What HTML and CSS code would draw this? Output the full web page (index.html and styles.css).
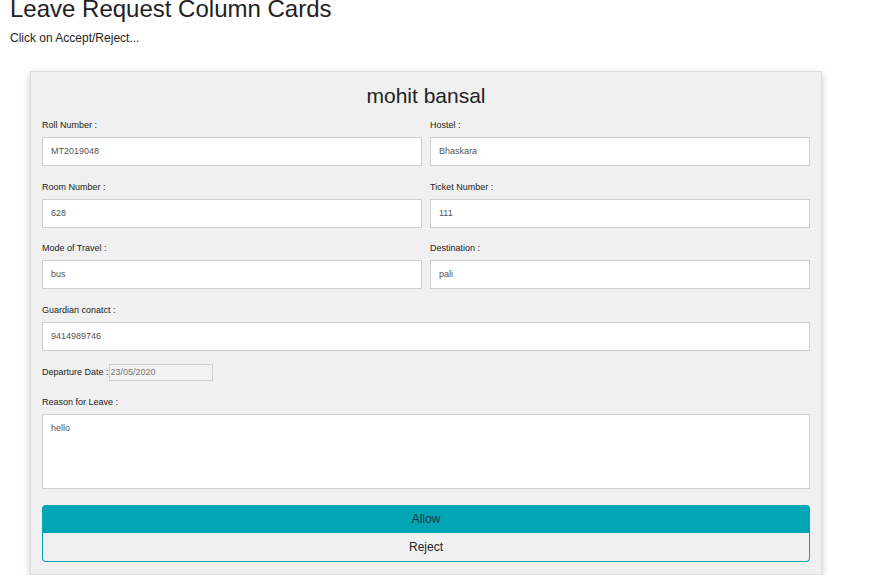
FILE: index.html
```html
<!DOCTYPE html>
<html>
<head>
<meta charset="utf-8">
<link rel="stylesheet" href="styles.css">
</head>
<body>
<h1 class="title">Leave Request Column Cards</h1>
<p class="subtitle">Click on Accept/Reject...</p>
<div class="card">
  <h2 class="name">mohit bansal</h2>
  <div class="grid">
    <div class="field">
      <label class="label">Roll Number :</label>
      <div class="input">MT2019048</div>
    </div>
    <div class="field">
      <label class="label">Hostel :</label>
      <div class="input">Bhaskara</div>
    </div>
    <div class="field">
      <label class="label">Room Number :</label>
      <div class="input">628</div>
    </div>
    <div class="field">
      <label class="label">Ticket Number :</label>
      <div class="input">111</div>
    </div>
    <div class="field">
      <label class="label">Mode of Travel :</label>
      <div class="input">bus</div>
    </div>
    <div class="field">
      <label class="label">Destination :</label>
      <div class="input">pali</div>
    </div>
    <div class="field full">
      <label class="label">Guardian conatct :</label>
      <div class="input">9414989746</div>
    </div>
  </div>
  <div class="date-row">
    <span class="label-inline">Departure Date :</span><span class="date-input">23/05/2020</span>
  </div>
  <div class="field reason">
    <label class="label">Reason for Leave :</label>
    <div class="textarea">hello</div>
  </div>
  <div class="actions">
    <button class="btn btn-allow">Allow</button>
    <button class="btn btn-reject">Reject</button>
  </div>
</div>
</body>
</html>
```

FILE: styles.css
```css
* { box-sizing: border-box; }
html, body { margin: 0; padding: 0; background: #fff; }
body {
  font-family: "Liberation Sans", Arial, sans-serif;
  color: #222;
  padding: 0 10px;
}
.title {
  font-size: 24px;
  font-weight: normal;
  line-height: 27px;
  margin: -5px 0 0;
  color: #222;
}
.subtitle {
  font-size: 12px;
  line-height: 14px;
  margin: 9px 0 0;
  color: #222;
}
.card {
  width: 792px;
  margin: 26px 0 0 20px;
  background: #f0f0f0;
  border: 1px solid #dcdcdc;
  box-shadow: 0 3px 7px rgba(0, 0, 0, 0.22);
  padding: 12px 11px 12px;
}
.name {
  font-size: 21px;
  font-weight: normal;
  line-height: 24px;
  text-align: center;
  margin: 0 0 12px;
  color: #222;
}
.grid {
  display: grid;
  grid-template-columns: 1fr 1fr;
  column-gap: 8px;
  row-gap: 15.67px;
}
.full { grid-column: 1 / 3; }
.field { display: flex; flex-direction: column; }
.label, .label-inline {
  font-size: 9px;
  line-height: 10px;
  color: #222;
}
.label { margin-bottom: 7px; }
.input {
  height: 29px;
  background: #fff;
  border: 1px solid #cfcfcf;
  font-size: 9px;
  color: #555;
  padding: 0 8px 1px;
  display: flex;
  align-items: center;
}
.date-row {
  display: flex;
  align-items: center;
  height: 17px;
  margin-top: 13px;
}
.date-input {
  width: 104px;
  height: 17px;
  border: 1px solid #cfcfcf;
  background: #f2f2f2;
  font-size: 9px;
  color: #777;
  padding: 0 1px;
  display: flex;
  align-items: center;
}
.reason { margin-top: 16px; }
.textarea {
  height: 75px;
  background: #fff;
  border: 1px solid #cfcfcf;
  font-size: 9px;
  color: #555;
  padding: 8px 8px;
}
.actions {
  margin-top: 16px;
  display: flex;
  flex-direction: column;
}
.btn {
  font-family: "Liberation Sans", Arial, sans-serif;
  font-size: 12px;
  width: 100%;
  margin: 0;
  cursor: pointer;
}
.btn-allow {
  height: 28px;
  background: #00a5b6;
  border: none;
  color: #1f3340;
  border-radius: 4px 4px 0 0;
}
.btn-reject {
  height: 29px;
  background: transparent;
  border: 1px solid #00a5b6;
  border-top: none;
  color: #222;
  border-radius: 0 0 4px 4px;
}
```
